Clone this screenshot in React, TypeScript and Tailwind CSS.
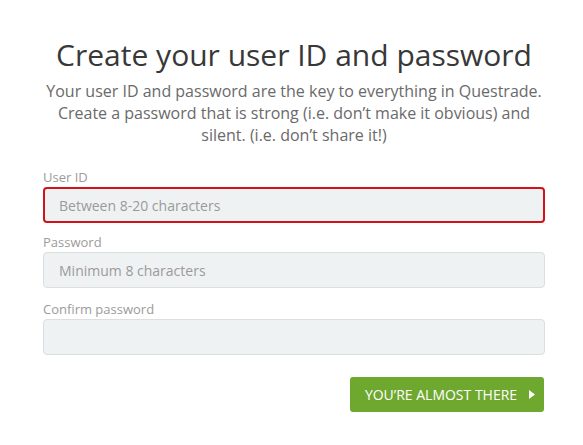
const font = { fontFamily: '"Open Sans", "Noto Sans", sans-serif' };

function Field({
  label,
  placeholder,
  error,
}: {
  label: string;
  placeholder?: string;
  error?: boolean;
}) {
  return (
    <div className="flex flex-col">
      <label className="text-[13px] leading-[18px] text-[#9b9b9b] mb-[1px]">{label}</label>
      <div
        className={
          error
            ? "h-[36px] rounded-[4px] border-2 border-[#d0121b] bg-[#eff2f3] px-[14px] flex items-center"
            : "h-[36px] rounded-[4px] border border-[#dcdfe0] bg-[#eff2f3] px-[15px] flex items-center"
        }
      >
        <span className="text-[14px] text-[#9a9a9a]">{placeholder}</span>
      </div>
    </div>
  );
}

export default function App() {
  return (
    <div className="w-[583px] h-[445px] bg-white" style={font}>
      <div className="ml-[43px] w-[502px] pt-[37px]">
        <h1 className="text-center whitespace-nowrap text-[30px] leading-[36px] text-[#383838]">
          Create your user ID and password
        </h1>
        <p className="text-center text-[16px] leading-[22px] text-[#6a6a6a] mt-[7px]">
          Your user ID and password are the key to everything in Questrade.
          <br />
          Create a password that is strong (i.e. don’t make it obvious) and
          <br />
          silent. (i.e. don’t share it!)
        </p>
        <div className="mt-[22px] flex flex-col gap-[10px]">
          <Field label="User ID" placeholder="Between 8-20 characters" error />
          <Field label="Password" placeholder="Minimum 8 characters" />
          <div className="mt-[2px]">
            <Field label="Confirm password" />
          </div>
        </div>
        <div className="mt-[22px] flex justify-end pr-[1px]">
          <button className="h-[35px] w-[194px] rounded-[3px] bg-[#6fa82f] text-white text-[14px] uppercase flex items-center justify-center gap-[12px] pl-[6px]">
            <span>You’re almost there</span>
            <svg width="6" height="9" viewBox="0 0 6 9">
              <path d="M0 0 L6 4.5 L0 9 Z" fill="white" />
            </svg>
          </button>
        </div>
      </div>
    </div>
  );
}
